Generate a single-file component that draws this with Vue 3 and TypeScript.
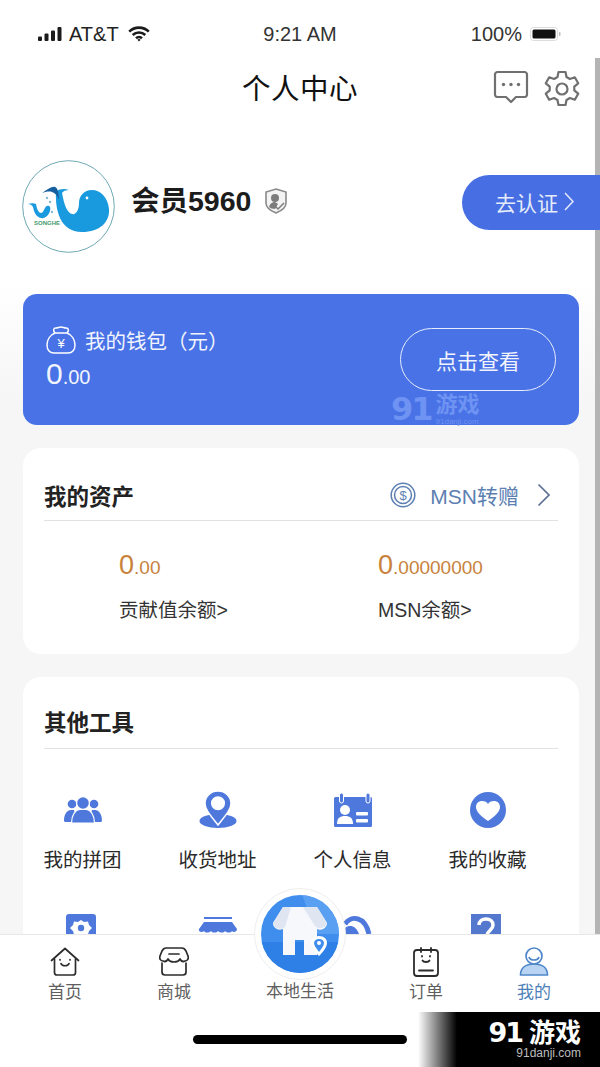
<script setup lang="ts">
// the second row is cut off by the tab bar, so its captions never show
const tools = [
  { label: '我的拼团', icon: 'team' },
  { label: '收货地址', icon: 'pin' },
  { label: '个人信息', icon: 'card' },
  { label: '我的收藏', icon: 'heart' },
  { label: '', icon: 'gear' },
  { label: '', icon: 'shop' },
  { label: '', icon: 'service' },
  { label: '', icon: 'help' },
]
</script>

<template>
  <div class="page">
    <div class="status">
      <div class="st-left">
        <svg class="signal" width="24" height="14" viewBox="0 0 24 14">
          <rect x="0" y="9.5" width="4" height="4.5" rx="1" />
          <rect x="6.5" y="6.5" width="4" height="7.5" rx="1" />
          <rect x="13" y="3.5" width="4" height="10.5" rx="1" />
          <rect x="19.5" y="0" width="4" height="14" rx="1" />
        </svg>
        <span>AT&amp;T</span>
        <svg class="wifi" width="22" height="16" viewBox="0 0 22 16" fill="none" stroke="#1c1c1c" stroke-width="2.6">
          <path d="M1.2 5.6a14 14 0 0 1 19.6 0" />
          <path d="M4.7 9a9 9 0 0 1 12.6 0" />
          <path d="M8 12.2a4.4 4.4 0 0 1 6 0" />
          <path d="M9.4 13.7L11 15.4l1.6-1.7a2.3 2.3 0 0 0-3.2 0z" fill="#1c1c1c" stroke="none" />
        </svg>
      </div>
      <span class="st-time">9:21 AM</span>
      <div class="st-right">
        <span>100%</span>
        <svg width="32" height="14" viewBox="0 0 32 14">
          <rect x="0.5" y="0.5" width="27" height="13" rx="3" fill="#fff" stroke="#ddd" />
          <rect x="2.5" y="2.5" width="23" height="9" rx="1.5" fill="#111" />
          <rect x="29" y="5" width="1.5" height="4" rx="0.7" fill="#bbb" />
        </svg>
      </div>
    </div>

    <div class="nav">
      <span class="nav-title">个人中心</span>
      <div class="nav-icons">
        <svg width="36" height="34" viewBox="0 0 36 34" fill="none" stroke="#707070" stroke-width="2.2" stroke-linejoin="round">
          <path d="M4 2h28a2.6 2.6 0 0 1 2 2v21a2.6 2.6 0 0 1-2 2h-9l-5 5-5-5H4a2.6 2.6 0 0 1-2-2V4a2.6 2.6 0 0 1 2-2z" />
          <circle cx="10.5" cy="14.5" r="1.7" fill="#707070" stroke="none" />
          <circle cx="18" cy="14.5" r="1.7" fill="#707070" stroke="none" />
          <circle cx="25.5" cy="14.5" r="1.7" fill="#707070" stroke="none" />
        </svg>
        <svg width="36" height="36" viewBox="0 0 36 36" fill="none" stroke="#707070" stroke-width="2.2" stroke-linejoin="round">
          <path d="M14.5 2h7l1 5 3.4 2 4.9-1.7 3.4 6-3.9 3.3v3.8l3.9 3.3-3.4 6-4.9-1.7-3.4 2-1 5h-7l-1-5-3.4-2-4.9 1.7-3.4-6 3.9-3.3v-3.8l-3.9-3.3 3.4-6 4.9 1.7 3.4-2z" />
          <circle cx="18" cy="19" r="5.5" />
        </svg>
      </div>
    </div>

    <div class="profile">
      <svg class="avatar" width="93" height="93" viewBox="0 0 93 93">
        <circle cx="46.5" cy="46.5" r="45.8" fill="#fff" stroke="#6fa9b4" stroke-width="1" />
        <path d="M34 31C33 50 38 72 60 72C78 72 88 62 87 49C86 37 78 30 70 30C62 30 57 36 57 43C57 50 54 55 50 54C45 53 42 44 40 33C41 31 44 30 47 30C42 28 38 29 34 31Z" fill="#1a9ade" />
        <path d="M20 33C25 30 30 26 33 27C36 28 37 34 37 40C35 35 33 33 30 32C27 31 23 32 20 33Z" fill="#17609f" />
        <circle cx="65" cy="38" r="1.4" fill="#fff" />
        <path d="M6 44C9 43 12 43 14 44C15 50 17 53 19 53C22 53 22 47 25 46C28 45 29 48 28 51C27 55 23 59 19 58C14 57 12 52 11 47C10 45 8 44 6 44Z" fill="#1a9ade" />
        <circle cx="25" cy="38" r="1.2" fill="#7fb9d8" />
        <circle cx="28" cy="42" r="1.2" fill="#7fb9d8" />
        <circle cx="30" cy="52" r="1.2" fill="#7fb9d8" />
        <text x="12" y="65" class="songhe">SONGHE</text>
      </svg>
      <span class="name">会员5960</span>
      <svg class="shield" width="22" height="26" viewBox="0 0 22 26">
        <path d="M11 1l10 3v11c0 5-5 8-10 10C6 23 1 20 1 15V4z" fill="#f3f3f3" stroke="#8a8a8a" stroke-width="1.6" />
        <circle cx="10" cy="10" r="4" fill="#7c7c7c" />
        <path d="M4 19c1-4 4-5 6-5l3 2-3 5c-2 0-5-1-6-2z" fill="#7c7c7c" />
        <path d="M10 18l3 3 6-6" fill="none" stroke="#7c7c7c" stroke-width="1.5" />
      </svg>
      <div class="certify">去认证
        <svg width="10" height="19" viewBox="0 0 10 19" fill="none" stroke="#e6ebfa" stroke-width="1.5"><path d="M1 1l8 8.5-8 8.5" /></svg>
      </div>
    </div>

    <div class="wallet">
      <div class="wallet-info">
        <div class="wallet-title">
          <svg width="30" height="30" viewBox="0 0 30 30" fill="none" stroke="#fff" stroke-width="1.5">
            <path d="M9 8c-2-2-2-5 1-5 2 0 3-1 5-1s3 1 5 1c3 0 3 3 1 5" />
            <path d="M9 8h12c5 2 8 7 8 12 0 5-3 8-7 8H8c-4 0-7-3-7-8 0-5 3-10 8-12z" />
            <text x="15" y="23" class="yen">¥</text>
          </svg>
          <span>我的钱包（元）</span>
        </div>
        <div class="wallet-amount">0<small>.00</small></div>
      </div>
      <div class="wallet-btn">点击查看</div>
      <div class="wm-mini">
        <span class="wm-91">91</span>
        <div class="wm-mini-r"><b>游戏</b><i>91danji.com</i></div>
      </div>
    </div>

    <div class="card assets">
      <div class="card-head">
        <span class="card-title">我的资产</span>
        <div class="transfer">
          <svg width="26" height="26" viewBox="0 0 26 26" fill="none" stroke="#5d7fb2" stroke-width="1.5">
            <circle cx="13" cy="13" r="11.8" />
            <circle cx="13" cy="13" r="8.5" />
            <text x="13" y="17.5" class="dollar">$</text>
          </svg>
          <span>MSN转赠</span>
          <svg class="tr-arrow" width="13" height="24" viewBox="0 0 13 24" fill="none" stroke="#5d7096" stroke-width="1.7"><path d="M1.5 1.5L12 12 1.5 22.5" /></svg>
        </div>
      </div>
      <div class="asset-row">
        <div class="asset a1">
          <div class="asset-num">0<small>.00</small></div>
          <div class="asset-label">贡献值余额&gt;</div>
        </div>
        <div class="asset a2">
          <div class="asset-num">0<small>.00000000</small></div>
          <div class="asset-label">MSN余额&gt;</div>
        </div>
      </div>
    </div>

    <div class="card tools">
      <div class="card-head tools-head">
        <span class="card-title">其他工具</span>
      </div>
      <div class="tool-grid">
        <div v-for="t in tools" :key="t.icon" class="tool">
          <svg class="tool-ico" width="40" height="40" viewBox="0 0 40 40" fill="#4f78dc">
            <template v-if="t.icon === 'team'">
              <circle cx="9" cy="16" r="4.3" />
              <circle cx="31" cy="16" r="4.3" />
              <path d="M1 33c0-7 3-11 7-11h3l3 11v1H3c-1 0-2-.5-2-1zM39 33c0-7-3-11-7-11h-3l-3 11v1h11c1 0 2-.5 2-1z" />
              <circle cx="20" cy="15" r="6.4" stroke="#fff" stroke-width="1.2" />
              <path d="M8.5 35c0-8 4-13 8-13.5h7c4 .5 8 5.500 8 13.500z" stroke="#fff" stroke-width="1.2" />
            </template>
            <template v-else-if="t.icon === 'pin'">
              <ellipse cx="20" cy="33" rx="18.5" ry="7" />
              <path fill-rule="evenodd" d="M20 3c7.5 0 13 5.500 13 12.500 0 6-5.500 12-13 21.500C12.500 27.500 7 21.500 7 15.500 7 8.500 12.500 3 20 3zm0 6a6.300 6.300 0 1 0 0 12.600A6.300 6.300 0 0 0 20 9z" stroke="#fff" stroke-width="1.5" />
            </template>
            <template v-else-if="t.icon === 'card'">
              <rect x="1" y="9" width="38" height="30" rx="1.5" />
              <rect x="6.5" y="5" width="4" height="10" rx="2" stroke="#fff" />
              <rect x="33" y="5" width="4" height="10" rx="2" stroke="#fff" />
              <circle cx="12" cy="22" r="5" fill="#fff" />
              <path d="M4 36c0-6 3-8 8-8s8 2 8 8z" fill="#fff" />
              <rect x="23" y="24" width="12" height="3.5" rx="1" fill="#fff" />
              <rect x="23" y="31" width="12" height="3.5" rx="1" fill="#fff" />
            </template>
            <template v-else-if="t.icon === 'heart'">
              <circle cx="20" cy="22" r="18" />
              <path d="M20 33c-7-5-12-9-12-14 0-4 3-6 6-6 3 0 5 1 6 3 1-2 3-3 6-3 3 0 6 2 6 6 0 5-5 9-12 14z" fill="#fff" />
            </template>
            <template v-else-if="t.icon === 'gear'">
              <rect x="3" y="2" width="30" height="32" rx="3" />
              <path d="M18 8l3 2 4-.5 1 3.500 3 3-3 3-1 3.500-4-.5-3 2-3-2-4 .5-1-3.500-3-3 3-3 1-3.500 4 .5z" fill="#fff" />
              <circle cx="18" cy="16" r="3.2" />
            </template>
            <template v-else-if="t.icon === 'shop'">
              <rect x="6" y="5" width="28" height="2" />
              <path d="M6 10h28l5 7c0 3-4 4-5 2-1 2-5 2-7 0-1 2-5 2-7 0-1 2-6 2-7 0-2 2-6 2-7 0-2 2-6 1-5-2z" />
            </template>
            <template v-else-if="t.icon === 'service'">
              <path d="M12 12C18 3 32 4 36 22" fill="none" stroke="#4f78dc" stroke-width="5" />
              <path d="M12 22v-6c5-4 11-2 14 6z" />
            </template>
            <template v-else>
              <rect x="3" y="2" width="30" height="32" fill="#5578cf" />
              <path d="M11 13c0-4 3-6 7-6s7 2 7 6c0 5-5 5-6 10" fill="none" stroke="#fff" stroke-width="3.5" />
            </template>
          </svg>
          <span v-if="t.label" class="tool-label">{{ t.label }}</span>
        </div>
      </div>
    </div>

    <div class="tabbar">
      <div class="tab">
        <svg width="30" height="30" viewBox="0 0 30 30" fill="none" stroke="#2c2c2c" stroke-width="1.7" stroke-linejoin="round" stroke-linecap="round">
          <path d="M1.5 13.5L15 1.5l13.5 12" />
          <path d="M4.5 12v13.5a2.5 2.5 0 0 0 2.5 2.5h16a2.5 2.5 0 0 0 2.5-2.5V12" />
          <path d="M11 16.5c1 3 7 3 8 0" />
          <path d="M10 12.5v.5M20 12.5v.5" />
        </svg>
        <span>首页</span>
      </div>
      <div class="tab">
        <svg width="30" height="30" viewBox="0 0 30 30" fill="none" stroke="#2c2c2c" stroke-width="1.7" stroke-linejoin="round" stroke-linecap="round">
          <path d="M7 1h16c2 0 3 1 4 3l2 5c1 3-1 5-3 5-2 1-4 0-5-2-1 2-3 3-6 3s-5-1-6-3c-1 2-3 3-5 2-2 0-4-2-3-5l2-5c1-2 2-3 4-3z" />
          <path d="M3 16v9c0 2 1 3 3 3h18c2 0 3-1 3-3v-9" />
          <path d="M10 7h10" />
        </svg>
        <span>商城</span>
      </div>
      <div class="tab tab-center">
        <span>本地生活</span>
      </div>
      <div class="tab">
        <svg width="30" height="30" viewBox="0 0 30 30" fill="none" stroke="#2c2c2c" stroke-width="1.8" stroke-linejoin="round" stroke-linecap="round">
          <rect x="3" y="3" width="24" height="26" rx="3" />
          <path d="M10 1v4M20 1v4" />
          <path d="M11.5 13.5c1 2 6 2 7 0" />
          <path d="M11 9v.5M19 9v.5" />
          <path d="M8 23.5h14" />
        </svg>
        <span>订单</span>
      </div>
      <div class="tab tab-on">
        <svg width="30" height="30" viewBox="0 0 30 30" fill="none" stroke="#4d86c9" stroke-width="1.7" stroke-linejoin="round">
          <path d="M1.5 28c0-7 5-11 13.5-11s13.5 4 13.5 11z" fill="#b9d3f2" />
          <circle cx="15" cy="9" r="8" fill="#fff" />
          <path d="M10 10c1 4 9 4 10 0" />
        </svg>
        <span>我的</span>
      </div>
    </div>

    <div class="fab">
      <svg width="80" height="80" viewBox="0 0 80 80">
        <defs>
          <clipPath id="fabClip"><circle cx="40" cy="40" r="39" /></clipPath>
        </defs>
        <circle cx="40" cy="40" r="39" fill="#3f8eee" />
        <g clip-path="url(#fabClip)">
          <path d="M0 48h80v32H0z" fill="#2e7fe6" />
          <path d="M42 0h38v40H56z" fill="#5aa0f2" />
        </g>
        <path d="M23 13h34l10 16c0 5-5 8-10 6v26H44V46h-9v15H23V35c-5 2-10-1-10-6z" fill="#f6f8fc" />
        <path d="M23 13l-10 16c0 5 7 8 12 4l6-20zM43 13h14l10 16c-1 5-8 7-12 3z" fill="#dfe6f2" />
        <path d="M59 42c5 0 8 3 8 7 0 4-4 9-8 13-4-4-8-9-8-13 0-4 3-7 8-7z" fill="#fff" />
        <path d="M59 45c3 0 5 2 5 4 0 3-3 6-5 9-2-3-5-6-5-9 0-2 2-4 5-4z" fill="#3f8eee" />
        <circle cx="59" cy="49" r="2" fill="#fff" />
      </svg>
    </div>

    <div class="home-bar"></div>
    <div class="scroll-thumb"></div>
    <div class="wm">
      <div class="wm-top"><span class="wm-big">91</span><b>游戏</b></div>
      <i>91danji.com</i>
    </div>
  </div>
</template>

<style scoped>
.page {
  position: relative;
  width: 600px;
  height: 1067px;
  overflow: hidden;
  background: linear-gradient(#fff 0, #fff 280px, #f6f6f6 400px, #f6f6f6 100%);
  font-family: "Liberation Sans", "Noto Sans CJK SC", sans-serif;
  color: #222;
}
.status {
  height: 46px;
  padding: 22px 38px 0;
  box-sizing: border-box;
  display: grid;
  grid-template-columns: 1fr auto 1fr;
  align-items: center;
  font-size: 20px;
  color: #222;
}
.st-left { display: flex; align-items: center; gap: 7px; }
.signal { fill: #1c1c1c; }
.wifi { margin-left: 2px; }
.st-time { color: #333; }
.st-right { display: flex; align-items: center; justify-content: flex-end; gap: 8px; color: #333; }
.nav {
  position: relative;
  height: 86px;
  display: flex;
  justify-content: center;
  padding-top: 24px;
  box-sizing: border-box;
}
.nav-title { font-size: 28.5px; line-height: 38px; color: #111; letter-spacing: 0.5px; }
.nav-icons {
  position: absolute;
  right: 20px;
  top: 24px;
  display: flex;
  gap: 15px;
  align-items: flex-start;
}
.profile {
  position: relative;
  display: flex;
  align-items: center;
  height: 93px;
  margin-top: 28px;
  padding-left: 22px;
}
.name { margin-left: 16px; font-size: 28.5px; font-weight: 700; color: #1c1c1c; position: relative; top: -8px; }
.shield { margin-left: 14px; position: relative; top: -6px; }
.songhe { font: 700 6px "Liberation Sans", sans-serif; fill: #3f9a6c; }
.certify {
  position: absolute;
  right: 0;
  top: 15px;
  z-index: 2;
  width: 138px;
  height: 55px;
  box-sizing: border-box;
  padding: 0 0 2px 33px;
  border-radius: 28px 0 0 28px;
  background: #476fe3;
  color: #e6ebfa;
  font-size: 21px;
  display: flex;
  align-items: center;
  gap: 6px;
}
.wallet {
  position: relative;
  margin: 41px 21px 0 23px;
  height: 131px;
  border-radius: 14px;
  background: #4872e6;
  color: #f1f4fd;
  display: flex;
  align-items: center;
  justify-content: space-between;
  padding: 0 23px;
  box-sizing: border-box;
}
.wallet-info { margin-top: -2px; }
.wallet-title { display: flex; align-items: center; gap: 9px; font-size: 20.5px; }
.wallet-title svg { flex: none; }
.yen { font: 400 13px "Liberation Sans", sans-serif; fill: #fff; stroke: none; text-anchor: middle; }
.wallet-amount { font-size: 30px; line-height: 32px; margin-top: 3px; }
.wallet-amount small { font-size: 20px; }
.wallet-btn {
  width: 156px;
  height: 63px;
  box-sizing: border-box;
  border: 1.5px solid #e8edfb;
  border-radius: 32px;
  display: flex;
  align-items: center;
  justify-content: center;
  font-size: 21px;
  color: #f1f4fd;
}
.wm-mini {
  position: absolute;
  left: 368px;
  top: 99px;
  display: flex;
  align-items: flex-start;
  color: #6f93f2;
}
.wm-91 { font: 700 32px/32px "DejaVu Sans", sans-serif; letter-spacing: -2px; }
.wm-mini-r { display: flex; flex-direction: column; margin-left: 4px; }
.wm-mini-r b { font-size: 22px; line-height: 24px; font-weight: 700; }
.wm-mini-r i { font-style: normal; font-size: 8px; line-height: 9px; }
.card {
  margin: 23px 21px 0 23px;
  background: #fff;
  border-radius: 18px;
}
.assets { height: 206px; }
.card-head {
  margin: 0 21px;
  height: 73px;
  border-bottom: 1px solid #e2e2e2;
  display: flex;
  align-items: center;
  justify-content: space-between;
  box-sizing: border-box;
  padding-top: 21px;
}
.card-title { font-size: 22.5px; font-weight: 700; color: #222; }
.transfer { display: flex; align-items: center; color: #5d7fb2; font-size: 21px; }
.transfer span { margin-left: 14px; }
.tr-arrow { margin-left: 18px; margin-right: 8px; }
.dollar { font: 400 13px "Liberation Sans", sans-serif; fill: #5d7fb2; stroke: none; text-anchor: middle; }
.asset-row { display: grid; grid-template-columns: 96px 259px auto; padding-top: 28px; }
.a1 { grid-column: 2; }
.a2 { grid-column: 3; }
.asset-num { font-size: 27px; line-height: 32px; color: #c8823c; }
.asset-num small { font-size: 19px; }
.asset-label { margin-top: 13px; font-size: 19.5px; color: #333; line-height: 26px; }
.tools { height: 420px; }
.tools-head { padding-top: 16px; height: 72px; }
.tool-grid {
  display: grid;
  grid-template-columns: repeat(4, 135px);
  margin-left: -8px;
  padding-top: 39px;
  row-gap: 39px;
}
.tool { display: flex; flex-direction: column; align-items: center; }
.tool-ico { display: block; }
.tool-label { margin-top: 19px; font-size: 19.5px; line-height: 26px; color: #2a2a2a; }
.tabbar {
  position: absolute;
  left: 0;
  right: 0;
  top: 934px;
  height: 133px;
  background: #fff;
  border-top: 1px solid #e8e8e8;
  box-sizing: border-box;
  display: grid;
  grid-template-columns: 130px 88px 164px 88px 128px;
  padding-top: 12px;
}
.tab { display: flex; flex-direction: column; align-items: center; font-size: 17px; color: #5f5f5f; }
.tab svg { display: block; }
.tab span { margin-top: 4px; line-height: 24px; }
.tab-center { padding-top: 33px; }
.tab-center span { white-space: nowrap; margin-top: 0; }
.tab-on { color: #4f7fb8; }
.fab {
  position: absolute;
  left: 254px;
  top: 888px;
  width: 92px;
  height: 92px;
  box-sizing: border-box;
  border-radius: 50%;
  background: #fff;
  border: 1px solid #eee;
  display: flex;
  align-items: center;
  justify-content: center;
}
.home-bar {
  position: absolute;
  left: 193px;
  top: 1035px;
  width: 214px;
  height: 9px;
  border-radius: 5px;
  background: #000;
}
.scroll-thumb {
  position: absolute;
  right: 0;
  top: 58px;
  width: 5px;
  height: 876px;
  background: #b4b4b4;
}
.wm {
  position: absolute;
  left: 418px;
  top: 1012px;
  width: 182px;
  height: 55px;
  box-sizing: border-box;
  padding-right: 19px;
  background: linear-gradient(90deg, #fff 0, #000 39px);
  color: #fff;
  display: flex;
  flex-direction: column;
  align-items: flex-end;
}
.wm-top { display: flex; align-items: center; height: 32px; margin-top: 5px; }
.wm-big { font: 700 27px/30px "DejaVu Sans", sans-serif; letter-spacing: -2px; margin-right: 7px; }
.wm-top b { font-size: 26px; line-height: 30px; font-weight: 700; }
.wm > i { font-style: normal; font-size: 12px; line-height: 16px; margin-top: -4px; color: #bdbdbd; }
</style>
